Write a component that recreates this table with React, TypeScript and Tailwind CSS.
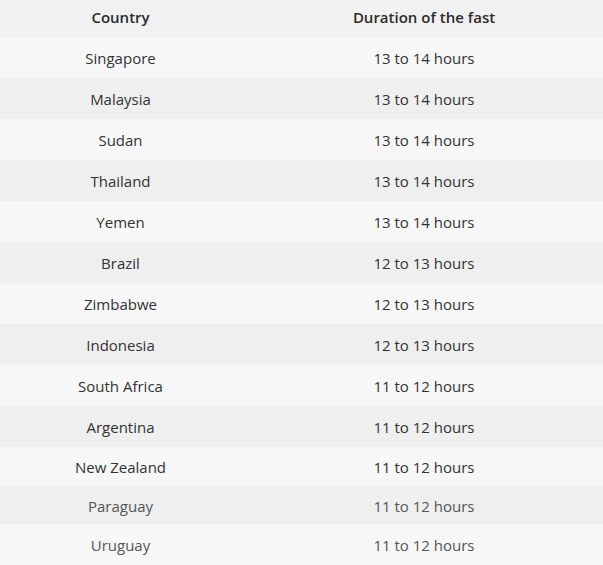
import React from "react";

const rows: [string, string][] = [
  ["Singapore", "13 to 14 hours"],
  ["Malaysia", "13 to 14 hours"],
  ["Sudan", "13 to 14 hours"],
  ["Thailand", "13 to 14 hours"],
  ["Yemen", "13 to 14 hours"],
  ["Brazil", "12 to 13 hours"],
  ["Zimbabwe", "12 to 13 hours"],
  ["Indonesia", "12 to 13 hours"],
  ["South Africa", "11 to 12 hours"],
  ["Argentina", "11 to 12 hours"],
  ["New Zealand", "11 to 12 hours"],
  ["Paraguay", "11 to 12 hours"],
  ["Uruguay", "11 to 12 hours"],
];

const heights = ["h-[41px]", "h-[41px]", "h-[41px]", "h-[41px]", "h-[41px]", "h-[41px]", "h-[41px]", "h-[41px]", "h-[41px]", "h-[41px]", "h-[39px]", "h-[38px]", "h-[41px]"];

export default function App() {
  return (
    <div className="w-[603px] h-[565px] overflow-hidden bg-[#f7f7f7] text-[15px] text-[#333]" style={{ fontFamily: '"Open Sans", "Noto Sans", sans-serif' }}>
      <div className="grid grid-cols-[241px_1fr] h-[37px] pb-[2px] items-center bg-[#f1f1f1] font-semibold text-[#2b2b2b]">
        <div className="text-center">Country</div>
        <div className="text-center pl-[4px]">Duration of the fast</div>
      </div>
      {rows.map(([c, d], i) => (
        <div
          key={c}
          className={`grid grid-cols-[241px_1fr] items-center pt-[2px] ${heights[i]} ${i % 2 === 0 ? "bg-[#f7f7f7]" : "bg-[#efefef]"} ${i >= 11 ? "text-[#555]" : "text-[#333]"}`}
        >
          <div className="text-center">{c}</div>
          <div className="text-center pl-[4px]">{d}</div>
        </div>
      ))}
    </div>
  );
}
